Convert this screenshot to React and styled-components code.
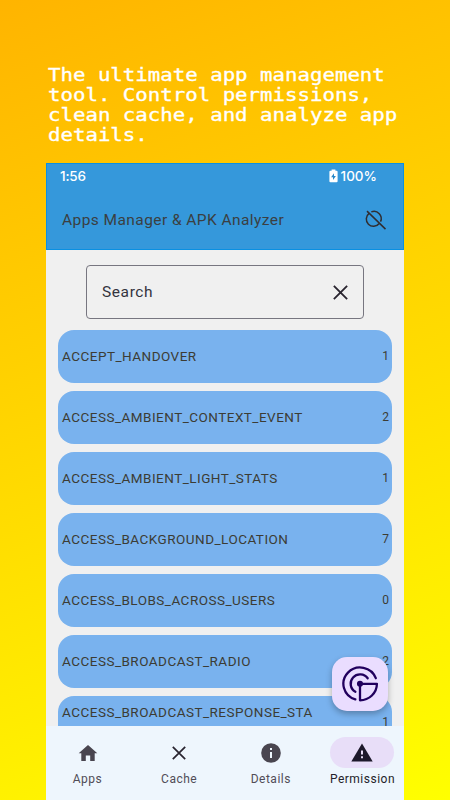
import React from "react";
import styled, { createGlobalStyle } from "styled-components";

const GlobalStyle = createGlobalStyle`
  * { box-sizing: border-box; }
  body { margin: 0; overflow: hidden; }
`;

const Poster = styled.main`
  width: 450px;
  height: 800px;
  display: flex;
  flex-direction: column;
  align-items: flex-start;
  padding: 65px 46px 0;
  overflow: hidden;
  background: linear-gradient(159deg, #ffb400, #ffff00);
  font-family: Roboto, sans-serif;
`;

const Headline = styled.h1`
  margin: 0 0 0 2px;
  height: 98px;
  font: 400 18.5px/20px "DejaVu Sans Mono", monospace;
  color: #fff;
  -webkit-text-stroke: 0.35px #fff;
  white-space: pre;
  transform: scaleX(1.12);
  transform-origin: 0 0;
`;

const Phone = styled.section`
  width: 358px;
  height: 637px;
  display: flex;
  flex-direction: column;
  background: #f0f0f0;
`;

const Header = styled.header`
  height: 87px;
  flex: none;
  border: 1px solid #0a90e2;
  background: #3598db;
`;

const StatusBar = styled.div`
  height: 25px;
  display: flex;
  align-items: center;
  justify-content: space-between;
  padding: 0 26px 1px 13px;
  font: 500 13.5px/24px Inter, sans-serif;
  letter-spacing: -0.2px;
  color: #fff;
`;

const Battery = styled.div`
  display: flex;
  align-items: center;
  gap: 3px;
  letter-spacing: 0;
`;

const TitleBar = styled.div`
  height: 61px;
  display: flex;
  align-items: center;
  justify-content: space-between;
  padding: 0 16px 0 15px;
`;

const Title = styled.h2`
  margin: 0;
  font-size: 15.5px;
  font-weight: 400;
  letter-spacing: 0.43px;
  color: #3b3f42;
`;

const Content = styled.div`
  position: relative;
  height: 476px;
  padding: 15px 12px 0;
  overflow: hidden;
`;

const Search = styled.div`
  height: 54px;
  margin: 0 28px 11px;
  padding: 0 15px;
  display: flex;
  align-items: center;
  justify-content: space-between;
  border: 1px solid #777680;
  border-radius: 4px;
  font-size: 15.5px;
  letter-spacing: 0.6px;
  color: #34343e;
`;

const List = styled.div`
  display: flex;
  flex-direction: column;
  gap: 8px;
`;

const Row = styled.div`
  height: 53px;
  flex: none;
  display: flex;
  align-items: center;
  justify-content: space-between;
  padding: 0 3px 1px 4px;
  border-radius: 16px;
  background: #79b2ee;
  color: #3c3c34;
  font-size: 13.5px;
`;

const Name = styled.span`
  line-height: 18px;
  letter-spacing: 0.48px;
  ${(p) => p.$raised && "margin-bottom: 20px;"}
`;

const Count = styled.span`
  font-size: 12px;
  line-height: 16px;
`;

const Fab = styled.button`
  position: absolute;
  left: 286px;
  top: 407px;
  width: 56px;
  height: 54px;
  padding: 0;
  border: 0;
  border-radius: 15px;
  background: #eaddff;
  box-shadow: 0 3px 6px rgba(0, 0, 0, 0.28);
  display: flex;
  align-items: center;
  justify-content: center;
`;

const Nav = styled.nav`
  height: 74px;
  flex: none;
  display: flex;
  justify-content: space-between;
  padding: 11px 8px 0;
  background: #eef6fd;
`;

const Tab = styled.div`
  width: 67px;
  display: flex;
  flex-direction: column;
  align-items: center;
  font-size: 12px;
  line-height: 18px;
  letter-spacing: 0.5px;
  color: ${(p) => (p.$active ? "#25232a" : "#514d57")};
  white-space: nowrap;
`;

const Pill = styled.div`
  width: 64px;
  height: 31px;
  margin-bottom: 2px;
  display: flex;
  align-items: center;
  justify-content: center;
  border-radius: 16px;
  background: ${(p) => (p.$active ? "#e8def8" : "transparent")};
`;

const BatteryIcon = () => (
  <svg width="9" height="14" viewBox="0 0 9 14">
    <path d="M2.6 0.4h3.8v1.3h1.1a1.1 1.1 0 0 1 1.1 1.1v9.4a1.1 1.1 0 0 1-1.1 1.1h-6a1.1 1.1 0 0 1-1.1-1.1V2.8a1.1 1.1 0 0 1 1.1-1.1h1.1z" fill="#fff" />
    <path d="M5 4.3v2.6h1.9L4 11V8.3H2.1z" fill="#2587c8" />
  </svg>
);

const SearchOffIcon = () => (
  <svg width="22" height="22" viewBox="0 0 22 22" fill="none" stroke="#302d30" strokeWidth="1.5">
    <path d="M4.1 4.4A7.2 7.2 0 1 0 14.2 14.5M6.3 2.9A7.2 7.2 0 0 1 15.5 12.7M2 2.1L20.5 20.1" />
  </svg>
);

const CloseIcon = ({ size = 14 }) => (
  <svg width={size} height={size} viewBox="0 0 14 14" fill="none" stroke="#29242f" strokeWidth="1.7">
    <path d="M0.8 0.8L13.2 13.2M13.2 0.8L0.8 13.2" />
  </svg>
);

const RadarIcon = () => (
  <svg width="38" height="36" viewBox="0 0 38 36" fill="none" stroke="#21005d" strokeWidth="2.3" strokeLinecap="round" strokeLinejoin="round">
    <path d="M34.8 12.2A16.7 16.3 0 1 0 14.3 33.4" />
    <path d="M26.7 12.3A9.4 9.3 0 1 0 14.4 25.8" />
    <path d="M19 17.8H35.9C35.9 27 28.2 34.3 19 34.3Z" />
    <circle cx="19" cy="17.8" r="1.9" />
  </svg>
);

const HomeIcon = () => (
  <svg width="20" height="18" viewBox="0 0 20 18">
    <path d="M7.8 17v-5.6h4.4V17h4.5V9.2h2.6L10 .9.7 9.2h2.6V17z" fill="#49454f" />
  </svg>
);

const InfoIcon = () => (
  <svg width="20" height="20" viewBox="0 0 20 20">
    <circle cx="10" cy="10" r="9.8" fill="#49454f" />
    <path d="M9 5h2v2H9zM9 9h2v6H9z" fill="#eef6fd" />
  </svg>
);

const WarningIcon = () => (
  <svg width="22" height="19" viewBox="0 0 22 19">
    <path d="M11 .5L21.7 18.5H.3z" fill="#1d192b" />
    <path d="M10 7.5h2v4h-2zM10 13.2h2v2h-2z" fill="#e8def8" />
  </svg>
);

const permissions = [
  { name: "ACCEPT_HANDOVER", count: 1 },
  { name: "ACCESS_AMBIENT_CONTEXT_EVENT", count: 2 },
  { name: "ACCESS_AMBIENT_LIGHT_STATS", count: 1 },
  { name: "ACCESS_BACKGROUND_LOCATION", count: 7 },
  { name: "ACCESS_BLOBS_ACROSS_USERS", count: 0 },
  { name: "ACCESS_BROADCAST_RADIO", count: 2 },
  { name: "ACCESS_BROADCAST_RESPONSE_STA", count: 1, clipped: true },
];

const tabs = [
  { label: "Apps", icon: <HomeIcon /> },
  { label: "Cache", icon: <CloseIcon /> },
  { label: "Details", icon: <InfoIcon /> },
  { label: "Permission", icon: <WarningIcon />, active: true },
];

export default function App() {
  return (
    <Poster>
      <GlobalStyle />
      <Headline>{"The ultimate app management\ntool. Control permissions,\nclean cache, and analyze app\ndetails."}</Headline>
      <Phone>
        <Header>
          <StatusBar>
            <span>1:56</span>
            <Battery><BatteryIcon />100%</Battery>
          </StatusBar>
          <TitleBar>
            <Title>Apps Manager &amp; APK Analyzer</Title>
            <SearchOffIcon />
          </TitleBar>
        </Header>
        <Content>
          <Search>Search<CloseIcon size={15} /></Search>
          <List>
            {permissions.map((p) => (
              <Row key={p.name}>
                <Name $raised={p.clipped}>{p.name}</Name>
                <Count>{p.count}</Count>
              </Row>
            ))}
          </List>
          <Fab aria-label="Scan"><RadarIcon /></Fab>
        </Content>
        <Nav>
          {tabs.map((t) => (
            <Tab key={t.label} $active={t.active}>
              <Pill $active={t.active}>{t.icon}</Pill>
              {t.label}
            </Tab>
          ))}
        </Nav>
      </Phone>
    </Poster>
  );
}
